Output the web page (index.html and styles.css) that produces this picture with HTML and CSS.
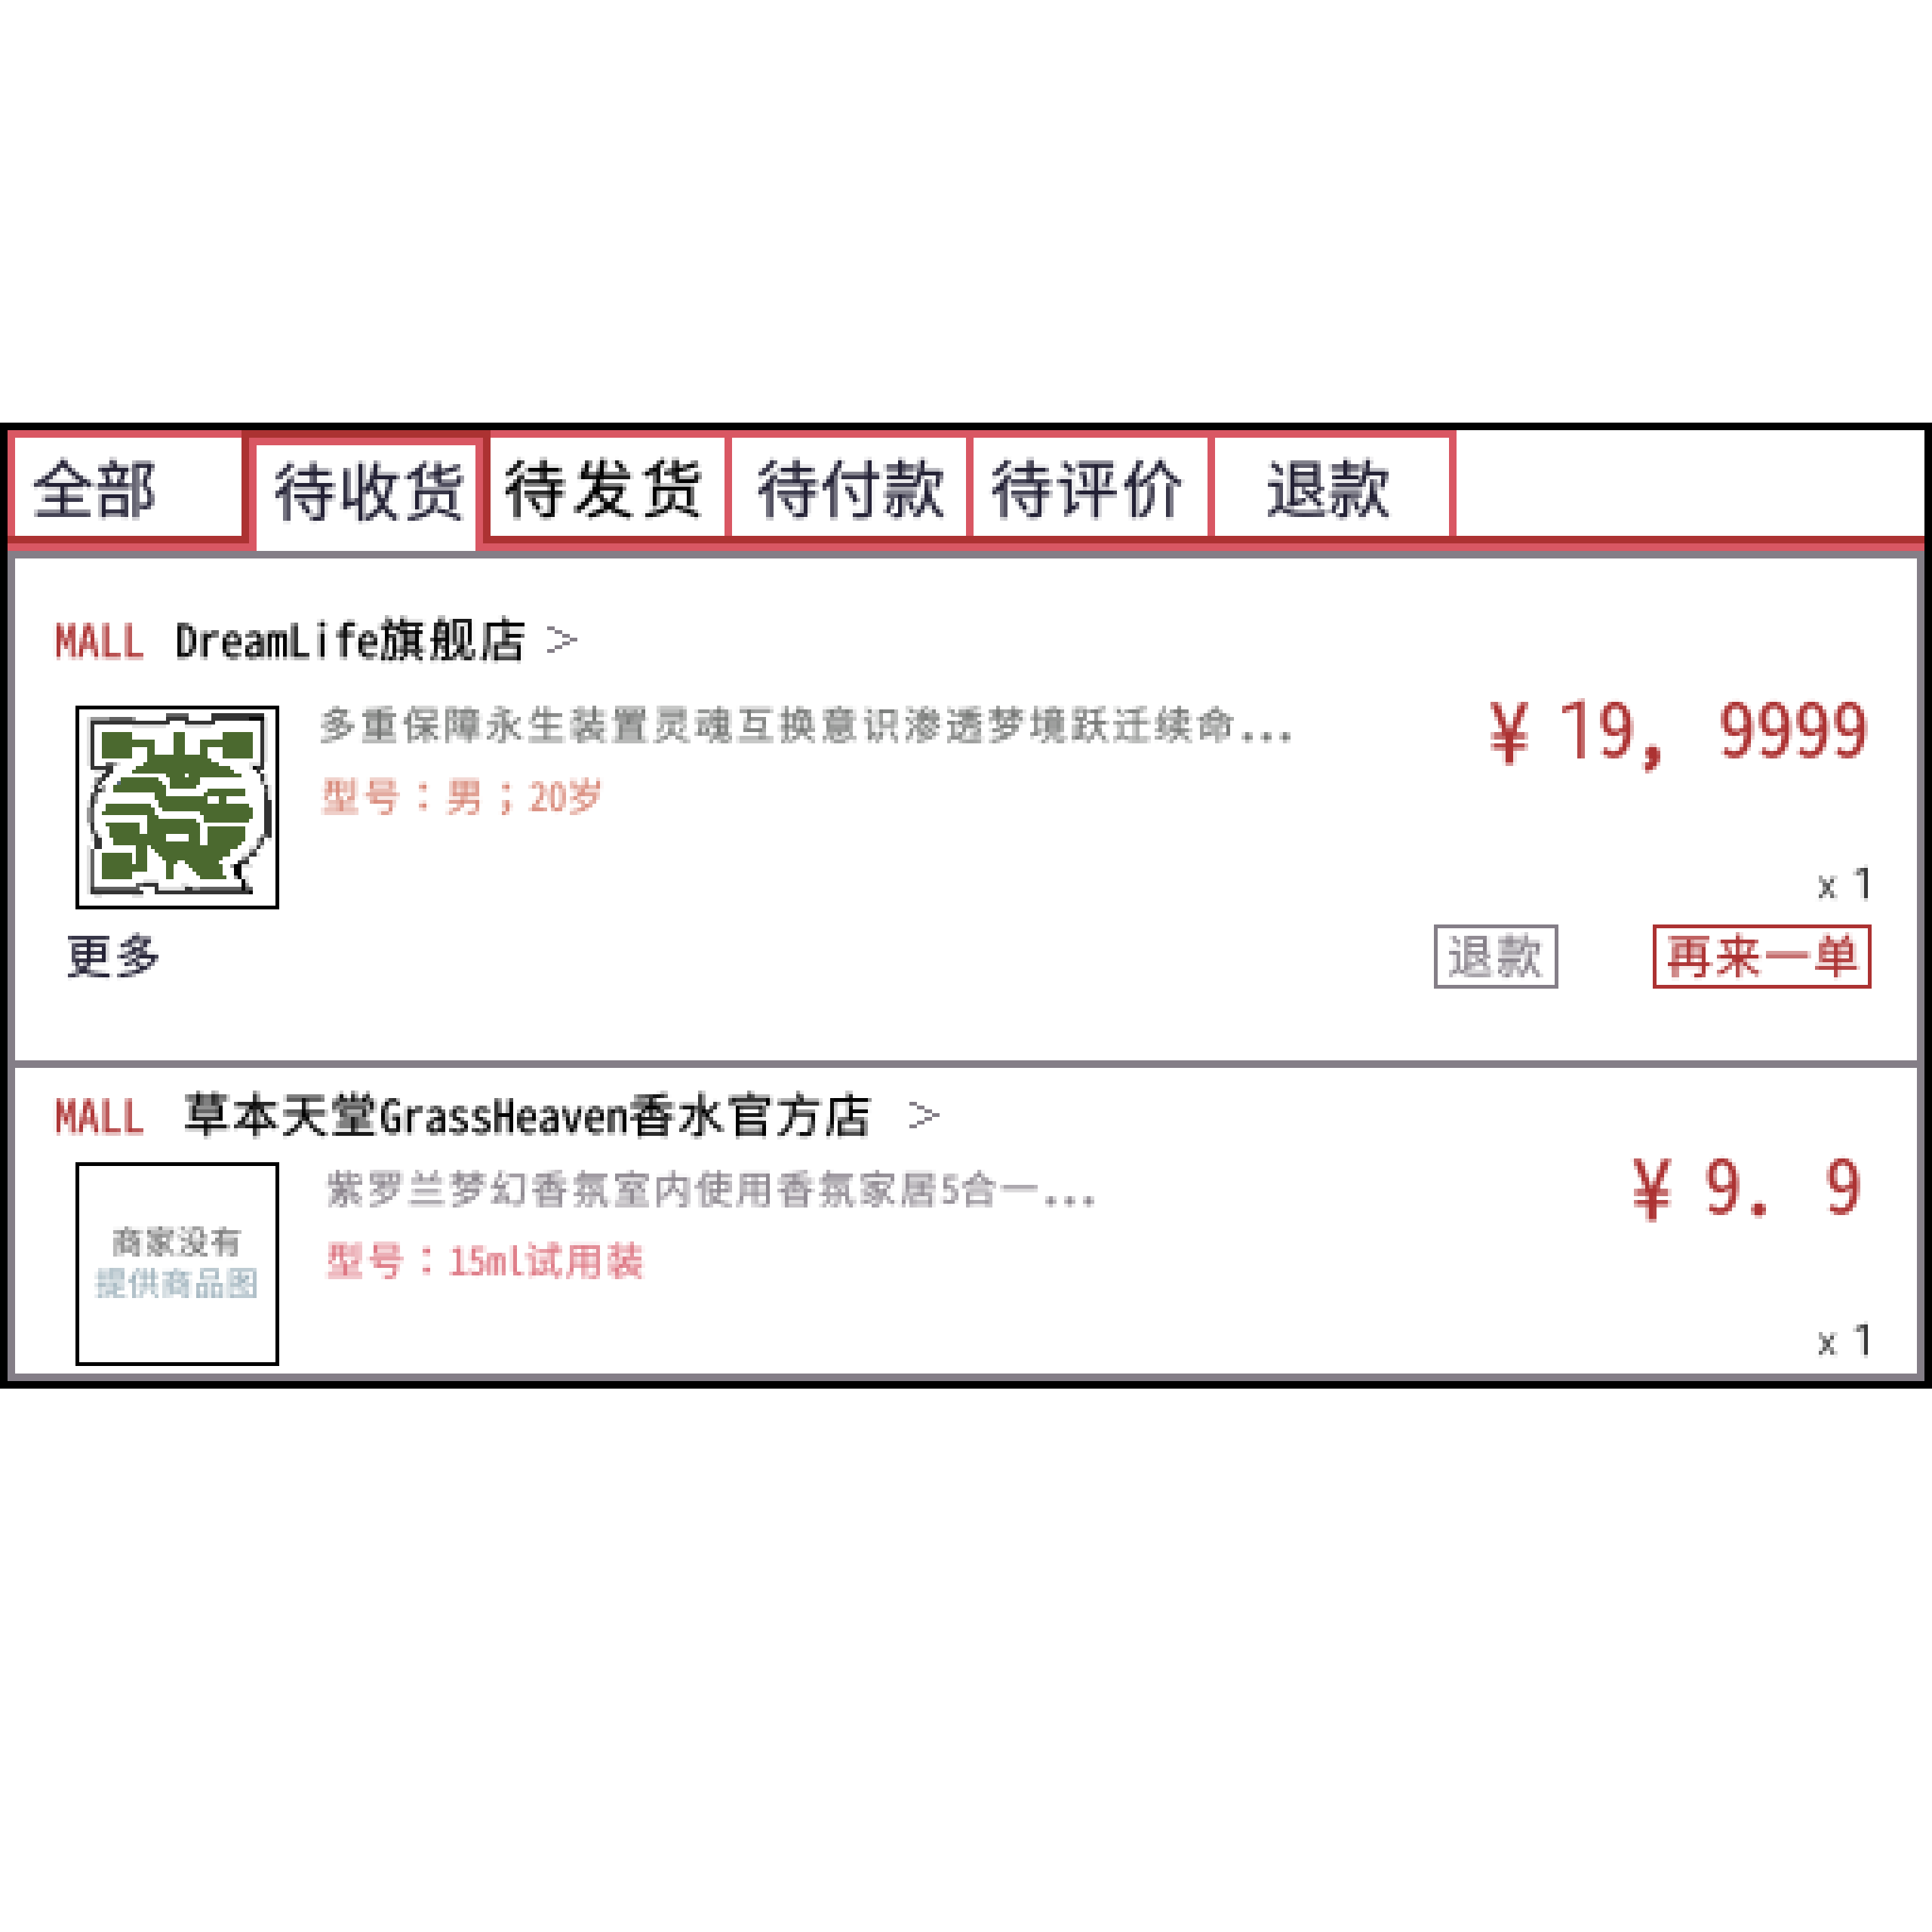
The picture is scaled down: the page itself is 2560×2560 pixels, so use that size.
FILE: index.html
```html
<!DOCTYPE html>
<html lang="zh-CN">
<head>
<meta charset="utf-8">
<title>DreamLife</title>
<link rel="stylesheet" href="styles.css">
</head>
<body>
<svg class="defs" width="0" height="0" aria-hidden="true">
  <!-- averages every 5x5 cell and paints it as one block -->
  <filter id="pixels" x="0" y="0" width="100%" height="100%" color-interpolation-filters="sRGB">
    <feConvolveMatrix in="SourceGraphic" order="5" kernelMatrix="1 1 1 1 1 1 1 1 1 1 1 1 1 1 1 1 1 1 1 1 1 1 1 1 1" divisor="25" edgeMode="duplicate" preserveAlpha="true" result="avg"/>
    <feFlood x="2" y="2" width="1" height="1" flood-color="#000" result="dot"/>
    <feOffset in="dot" dx="0" dy="0" x="0" y="0" width="5" height="5"/>
    <feTile result="grid"/>
    <feComposite in="avg" in2="grid" operator="in"/>
    <feMorphology operator="dilate" radius="2"/>
  </filter>
</svg>
<main class="window">
  <nav class="tabs">
    <a class="tab first"><span class="t0">全部</span></a>
    <a class="tab active"><span class="inner"><span class="t1">待收货</span></span></a>
    <a class="tab black"><span class="t2">待发货</span></a>
    <a class="tab"><span class="t3">待付款</span></a>
    <a class="tab"><span class="t4">待评价</span></a>
    <a class="tab"><span class="t5">退款</span></a>
  </nav>
  <div class="orders">
    <section class="order order-a">
      <header class="shop">
        <span class="mall">MALL</span>
        <span class="name">DreamLife<b>旗舰店</b></span>
        <svg class="arrow" viewBox="0 0 8 7"><path d="M0 0h2v1h-2zM2 1h2v1h-2zM4 2h2v1h-2zM6 3h2v1h-2zM4 4h2v1h-2zM2 5h2v1h-2zM0 6h2v1h-2z"/></svg>
      </header>
      <div class="item">
        <div class="thumb">
          <svg viewBox="3 4 52 52" shape-rendering="crispEdges">
            <path fill="#e0e0e0" d="M5 6h1v13h-1zM17 8h9v1h-9zM31 8h7v1h-7zM52 6h1v12h-1zM12 18h2v1h-2zM48 18h3v2h-3zM7 20h3v1h-3zM6 24h3v1h-3zM5 28h1v7h-1zM52 21h1v3h-1zM53 24h1v15h-1zM6 36h1v3h-1zM8 37h1v4h-1zM7 40h2v1h-2zM5 40h1v13h-1zM48 40h4v1h-4zM46 42h5v1h-5zM44 45h5v1h-5zM46 48h2v4h-2zM20 49h4v1h-4zM24 51h11v1h-11zM30 50h2v1h-2zM7 53h2v1h-2zM17 53h3v1h-3z"/>
            <path fill="#999" d="M6 6h12v1h-12zM18 7h2v1h-2zM12 18h1v1h-1zM7 22h1v3h-1zM9 24h1v2h-1zM7 27h1v2h-1zM5 30h1v4h-1zM7 36h1v3h-1zM51 23h1v1h-1zM52 26h1v9h-1zM51 37h1v2h-1zM50 38h1v2h-1zM48 41h1v1h-1zM46 43h1v1h-1zM43 45h1v1h-1zM44 48h1v1h-1zM47 50h1v1h-1zM33 51h9v1h-9z"/>
            <path fill="#606060" d="M11 6h6v1h-6zM26 5h6v1h-6zM10 18h2v1h-2zM8 22h1v1h-1zM6 26h1v11h-1zM7 26h1v1h-1zM52 24h1v2h-1zM52 35h1v3h-1zM51 39h1v1h-1zM49 41h1v1h-1zM47 43h1v1h-1zM6 41h1v11h-1zM18 50h5v1h-5zM7 51h12v1h-12zM35 51h14v1h-14z"/>
            <path fill="#333" d="M6 7h21v1h-21zM26 6h6v1h-6zM31 7h8v1h-8zM38 5h14v2h-14zM51 6h1v13h-1zM6 8h1v12h-1zM7 19h5v1h-5zM10 20h2v1h-2zM9 21h2v1h-2zM9 22h1v1h-1zM8 23h1v1h-1zM7 25h2v1h-2zM7 24h1v1h-1zM6 27h1v3h-1zM6 34h1v2h-1zM7 37h1v2h-1zM7 38h2v3h-2zM49 19h3v1h-3zM50 20h1v1h-1zM51 21h1v2h-1zM52 24h1v1h-1zM52 26h1v11h-1zM53 28h1v10h-1zM51 38h1v1h-1zM50 40h1v1h-1zM49 42h1v1h-1zM48 42h1v1h-1zM47 44h1v1h-1zM45 44h3v1h-3zM6 52h14v1h-14zM6 51h1v1h-1zM20 50h4v1h-4zM23 51h1v1h-1zM23 52h26v1h-26zM31 51h2v1h-2z"/>
            <path fill="#050505" d="M48 6h4v1h-4zM44 45h2v2h-2zM44 47h1v1h-1zM45 47h1v2h-1zM46 49h1v3h-1zM48 52h1v1h-1zM49 19h1v1h-1z"/>
            <path fill="#4b692f" d="M9 10h8v7h-8zM17 12h6v2h-6zM21 14h2v2h-2zM28 10h3v6h-3zM41 10h8v7h-8zM35 12h6v2h-6zM35 14h2v2h-2zM21 16h16v1h-16zM21 17h17v1h-17zM20 18h20v1h-20zM18 19h25v1h-25zM17 20h27v1h-27zM26 21h5v1h-5zM32 21h14v1h-14zM27 22h8v2h-8zM27 24h7v1h-7z
            M14 22h10v1h-10zM14 23h11v1h-11zM12 24h14v2h-14zM23 26h3v1h-3zM23 27h14v1h-14zM24 28h13v1h-13zM37 25h10v1h-10zM36 26h11v1h-11zM40 27h2v2h-2zM24 29h24v1h-24zM25 30h24v1h-24zM35 31h14v1h-14zM36 32h13v1h-13zM36 33h12v1h-12z
            M10 29h12v1h-12zM10 30h13v1h-13zM9 31h14v1h-14zM21 32h3v1h-3zM21 33h13v1h-13zM10 34h9v1h-9zM21 34h14v3h-14zM11 35h8v2h-8zM37 35h10v4h-10zM11 37h15v1h-15zM32 37h3v2h-3zM12 38h14v1h-14zM12 39h23v1h-23zM37 39h9v1h-9zM18 40h3v5h-3zM22 40h23v1h-23zM23 41h20v1h-20zM24 42h19v1h-19zM25 43h16v1h-16zM26 44h3v1h-3zM31 44h9v1h-9zM26 45h2v4h-2zM32 45h9v1h-9zM33 46h8v1h-8zM34 47h7v1h-7zM35 48h7v1h-7zM9 42h8v7h-8zM17 45h4v2h-4z"/>
            <path fill="#5b6e80" d="M13 23h1v1h-1z"/>
          </svg>
        </div>
        <div class="details">
          <p class="desc">多重保障永生装置灵魂互换意识渗透梦境跃迁续命<i class="dots">...</i></p>
          <p class="model">型号<u lang="zh-TW">：</u>男<u lang="zh-TW">；</u><i>20</i>岁</p>
        </div>
        <div class="cost">
          <p class="price"><span class="yen">¥</span><span class="one">1</span><span>9</span><span class="sep">,</span><span>9999</span></p>
          <p class="qty"><span class="times">x</span><span class="one">1</span></p>
        </div>
      </div>
      <footer class="actions">
        <span class="more">更多</span>
        <button class="btn grey">退款</button>
        <button class="btn red">再来一单</button>
      </footer>
    </section>
    <section class="order order-b">
      <header class="shop">
        <span class="mall">MALL</span>
        <span class="name"><b>草本天堂</b>GrassHeaven<b>香水官方店</b></span>
        <svg class="arrow" viewBox="0 0 8 7"><path d="M0 0h2v1h-2zM2 1h2v1h-2zM4 2h2v1h-2zM6 3h2v1h-2zM4 4h2v1h-2zM2 5h2v1h-2zM0 6h2v1h-2z"/></svg>
      </header>
      <div class="item">
        <div class="thumb empty"><span class="line-a">商家没有</span><span class="line-b">提供商品图</span></div>
        <div class="details">
          <p class="desc">紫罗兰梦幻香氛室内使用香氛家居<i>5</i>合一<i class="dots">...</i></p>
          <p class="model">型号<u lang="zh-TW">：</u><i>15ml</i>试用装</p>
        </div>
        <div class="cost">
          <p class="price"><span class="yen">¥</span><span>9</span><span class="sep">.</span><span>9</span></p>
          <p class="qty"><span class="times">x</span><span class="one">1</span></p>
        </div>
      </div>
    </section>
  </div>
</main>
</body>
</html>
```
FILE: styles.css
```css
* { box-sizing: border-box; margin: 0; padding: 0; }

body {
  background: #fff;
  font-family: "Noto Sans Mono CJK SC", "Noto Sans CJK SC", sans-serif;
  font-weight: 300;
  padding-top: 560px;
  white-space: nowrap;
}

b, i { font-weight: inherit; font-style: normal; }
u { font-family: "Noto Sans CJK TC", sans-serif; text-decoration: none; -webkit-text-stroke: 3px; }
.defs { display: block; height: 0; }

.window {
  width: 2560px;
  height: 1280px;
  border: 10px solid #000;
  background: #fff;
  filter: url(#pixels);
}

/* Tabs */
.tabs {
  display: flex;
  height: 160px;
  box-shadow: inset 0 -10px #d95763, inset 0 -20px #ac3232;
  color: #222034;
  font-size: 83px;
  -webkit-text-stroke: 1px;
}
.tab {
  width: 320px;
  height: 140px;
  border-top: 10px solid #d95763;
  border-right: 10px solid #d95763;
  line-height: 126px;
}
.tab.first { width: 310px; border-right: 0; border-left: 10px solid #d95763; }
.tab.active { width: 330px; height: 150px; border: 10px solid #ac3232; border-bottom: 0; }
.inner {
  display: block;
  height: 150px;
  border: 10px solid #d95763;
  border-bottom: 0;
  background: #fff;
  line-height: 115px;
}
.tab.black { color: #000; }
.t0 { margin-left: 22px; }
.t1 { margin-left: 22px; letter-spacing: 3px; }
.t2 { margin-left: 17px; letter-spacing: 8px; }
.t3 { margin-left: 32px; letter-spacing: 1px; }
.t4 { margin-left: 22px; letter-spacing: 4px; }
.t5 { margin-left: 67px; }

/* Orders */
.orders { height: 1100px; border: 10px solid #847e87; }
.order-a { height: 675px; padding-top: 65px; border-bottom: 10px solid #847e87; }
.order-b { padding-top: 20px; }

.shop { display: flex; height: 80px; padding-left: 52px; font-size: 60px; line-height: 79px; -webkit-text-stroke: 1px; }
.mall { width: 160px; color: #ac3232; }
.name { width: 493px; color: #000; }
.name b { font-size: 62px; line-height: 0; letter-spacing: 5px; }
.order-b .mall { width: 171px; }
.order-b .name { width: 962px; }
.order-b .name b { letter-spacing: 3px; }
.arrow { width: 40px; height: 35px; margin-top: 25px; fill: #847e87; shape-rendering: crispEdges; }

.item { display: flex; height: 295px; padding: 0 63px 0 80px; }
.order-a .item { margin-top: 25px; }
.thumb { width: 270px; height: 270px; margin-top: 25px; border: 5px solid #000; background: #fff; }
.thumb svg { display: block; width: 260px; height: 260px; }
.empty { padding-top: 70px; text-align: center; font-size: 42px; line-height: 55px; letter-spacing: 1.5px; -webkit-text-stroke: .6px; }
.empty span { display: block; }
.line-a { color: #6c6c6c; }
.line-b { color: #98adb8; }

.details { padding: 17px 0 0 52px; font-size: 50px; line-height: 60px; letter-spacing: 5.4px; -webkit-text-stroke: 1px; }
.order-b .details { padding: 27px 0 0 62px; letter-spacing: 4.3px; }
.details i { letter-spacing: 0; }
.details .dots { -webkit-text-stroke: 5px; }
.desc { height: 60px; margin-bottom: 35px; color: #747674; }
.model { height: 60px; padding-left: 4px; color: #d88878; letter-spacing: 5px; }
.order-b .desc { color: #8b858d; }
.order-b .model { padding: 0; color: #dd7480; letter-spacing: 4.3px; }

.cost { display: flex; flex: 1; flex-direction: column; align-items: flex-end; }
.price { display: flex; height: 100px; color: #ac3232; font-size: 100px; line-height: 100px; -webkit-text-stroke: 1px; }
.one { font-family: Roboto, sans-serif; font-weight: 300; }
.price .one { width: 50px; margin: 0 5px 0 -5px; font-size: 105px; line-height: 118px; -webkit-text-stroke: 2px; }
.yen { width: 60px; margin-right: 35px; font-size: 112px; line-height: 106px; }
.sep { width: 110px; font-size: 90px; line-height: 108px; -webkit-text-stroke: 6px; }
.order-b .price { padding-right: 9px; }
.order-b .yen { margin-right: 37px; }
.qty { display: flex; height: 60px; margin-top: 125px; color: #2a2a2a; font-size: 55px; -webkit-text-stroke: 1px; }
.times { width: 46px; font-family: Roboto, sans-serif; font-size: 50px; line-height: 76px; }
.qty .one { width: 22px; line-height: 72px; -webkit-text-stroke: 2px; }

.actions { display: flex; height: 85px; margin-top: 20px; padding: 0 60px 0 67px; font-size: 61px; -webkit-text-stroke: 1px; }
.more { flex: 1; color: #222034; line-height: 78px; letter-spacing: 4px; }
.btn {
  height: 85px;
  border: 5px solid;
  background: none;
  font: inherit;
  line-height: 68px;
  letter-spacing: 4px;
  text-align: left;
  -webkit-text-stroke: inherit;
}
.btn.grey { width: 165px; margin-right: 125px; padding: 0 0 7px 13px; color: #847e87; }
.btn.red { width: 290px; padding: 0 0 7px 13px; color: #ac3232; }
```
